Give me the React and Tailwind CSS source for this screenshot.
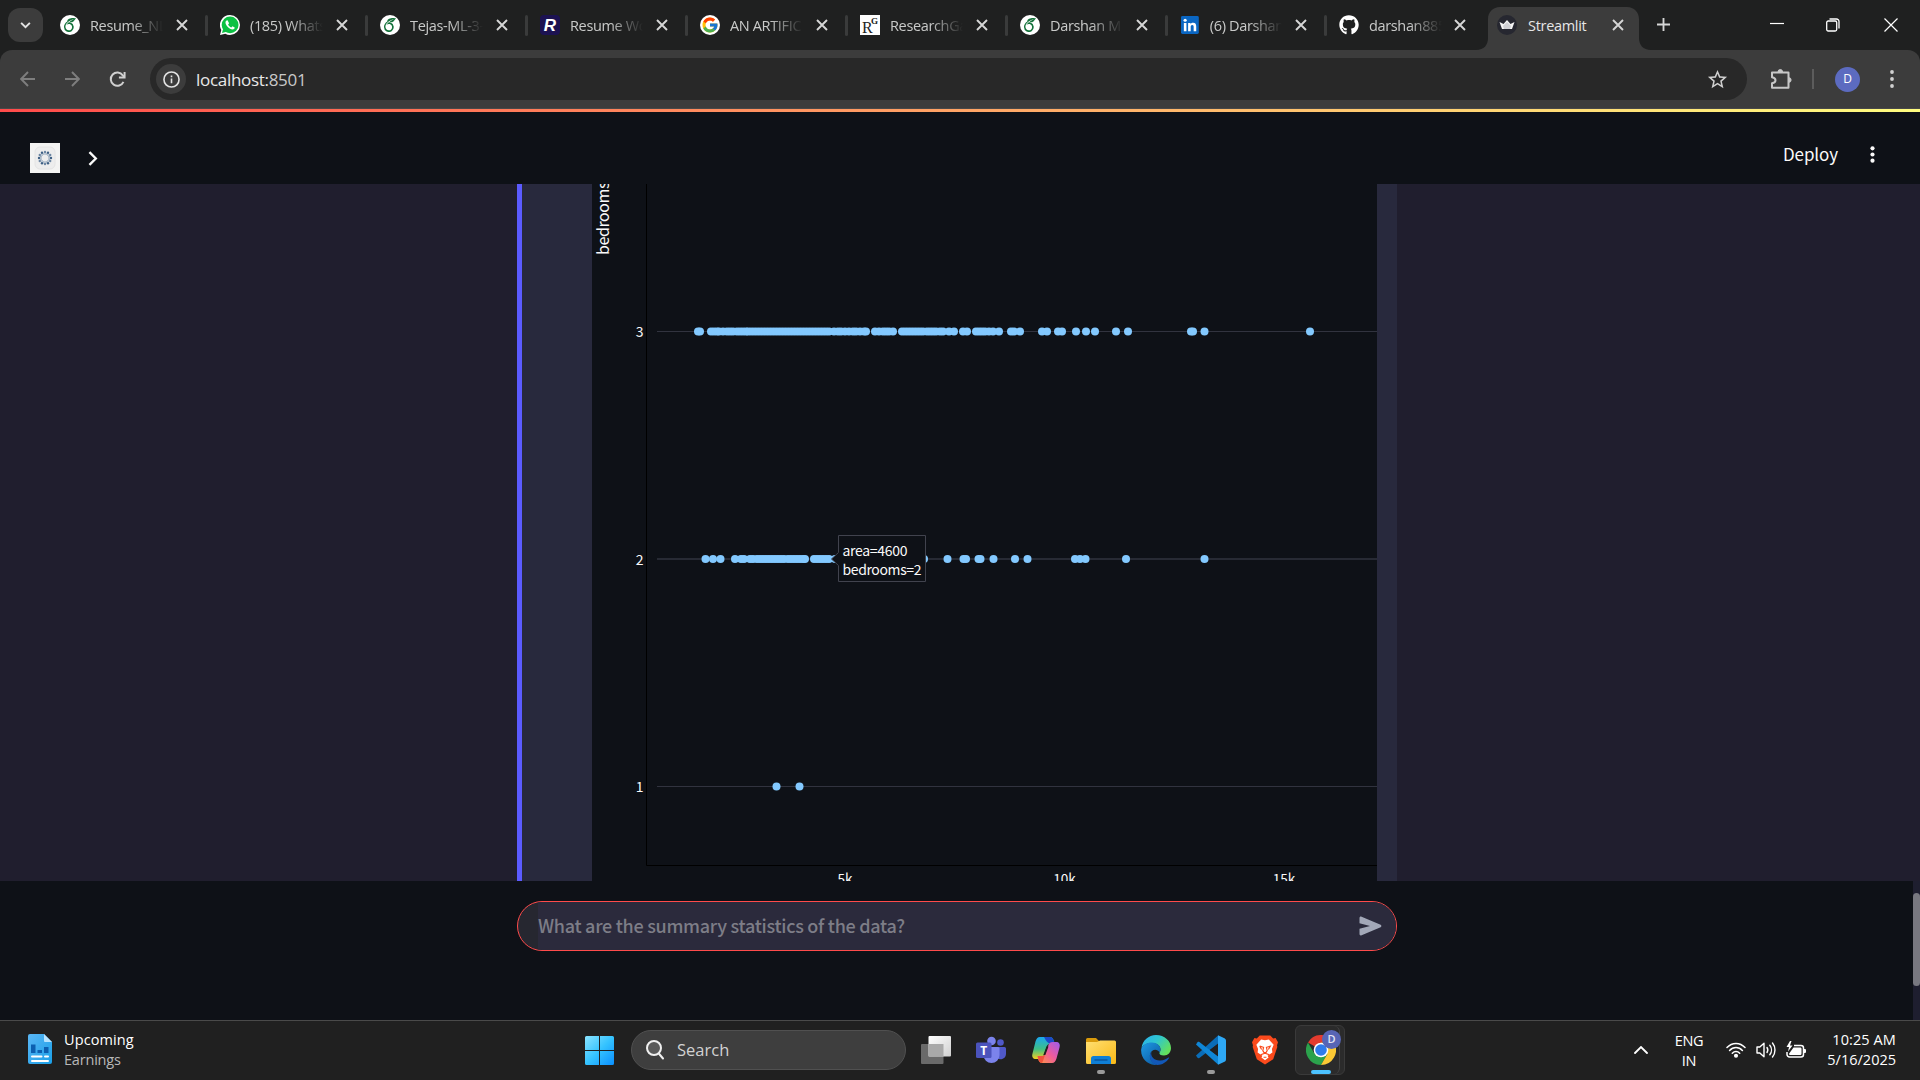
import React from "react";
import { FaGithub } from "react-icons/fa";
import { FcGoogle } from "react-icons/fc";
import { SiOverleaf } from "react-icons/si";

const ui = "font-['Open_Sans','Noto_Sans',sans-serif]";

function Close({ className = "" }) {
  return (
    <svg viewBox="0 0 12 12" className={"size-3 shrink-0 " + className} stroke="#d6d6d6" strokeWidth="1.9">
      <path d="M1 1l10 10M11 1L1 11" />
    </svg>
  );
}

const Overleaf = () => (
  <span className="flex size-5 items-center justify-center rounded-full bg-white text-[#13713a]">
    <SiOverleaf className="size-[14px]" />
  </span>
);

const WhatsApp = () => (
  <svg viewBox="0 0 20 20" className="size-5">
    <path d="M10 0a10 10 0 0 1 0 20c-1.700 0-3.300-.4-4.700-1.200L0 20l1.300-5A10 10 0 0 1 10 0Z" fill="#fff" />
    <circle cx="10.100" cy="9.900" r="8.400" fill="#0cc143" />
    <path d="M2 18l1.200-4.600 3.300 3.400Z" fill="#0cc143" />
    <path d="M7.500 5.300c-.9-.3-2 .8-2 2.200 0 3 4 6.900 7 6.900 1.200 0 2.300-.9 2.200-2l-2.200-1.200-1.200 1.200c-1.500-.6-2.600-1.700-3.200-3l1-1.100Z" fill="#fff" />
  </svg>
);

const Resume = () => (
  <span className="flex size-5 items-center justify-center rounded bg-[#1c1252] font-['Liberation_Sans',sans-serif] text-[17px] leading-none font-bold text-white italic">R</span>
);

const Google = () => (
  <span className="flex size-5 items-center justify-center rounded-full bg-white">
    <FcGoogle className="size-[18px]" />
  </span>
);

const ResearchGate = () => (
  <span className="relative block size-5 bg-white font-['Liberation_Serif',serif] leading-none text-[#222]">
    <span className="absolute top-[5px] left-[2px] text-[16px] leading-none">R</span>
    <span className="absolute top-[2px] right-[2px] text-[9px] leading-none font-bold">G</span>
  </span>
);

const LinkedIn = () => (
  <svg viewBox="0 0 20 20" className="size-5">
    <rect x="1" y="1" width="18" height="18" rx="1.500" fill="#0a66c2" />
    <circle cx="5.200" cy="5.200" r="1.600" fill="#fff" />
    <path d="M3.900 8h2.600v8.200H3.900ZM8.200 8h2.500v1.200c.5-.9 1.400-1.400 2.600-1.400 2.400 0 3.100 1.500 3.100 3.700v4.700h-2.600V12c0-1.200-.2-2-1.400-2-1.200 0-1.600.9-1.600 2.100v4.100H8.200Z" fill="#fff" />
  </svg>
);

const Github = () => <FaGithub className="size-5 text-white" />;

const TABS = [
  [Overleaf, "Resume_NLP"],
  [WhatsApp, "(185) WhatsApp"],
  [Overleaf, "Tejas-ML-3-1"],
  [Resume, "Resume Worded"],
  [Google, "AN ARTIFICIAL"],
  [ResearchGate, "ResearchGate"],
  [Overleaf, "Darshan M R"],
  [LinkedIn, "(6) Darshan M"],
  [Github, "darshan8850"],
];

function TabStrip() {
  return (
    <div className={"flex h-[50px] shrink-0 bg-[#1f2020] " + ui}>
      <div className="mt-2 ml-2 flex h-[34px] w-[35px] shrink-0 items-center justify-center rounded-xl bg-[#3c3c3c]">
        <svg viewBox="0 0 12 8" className="h-[7px] w-[11px]" fill="none" stroke="#e3e3e3" strokeWidth="2.200">
          <path d="M1 1l5 5 5-5" />
        </svg>
      </div>
      <div className="ml-[5px] flex shrink-0">
        {TABS.map(([Icon, label], i) => (
          <div key={i} className={"flex h-[50px] shrink-0 items-center pl-3 " + (i > 7 ? "w-[149px]" : i === 7 ? "w-[159px]" : "w-[160px]")}>
            <Icon />
            <span className="mt-px ml-[10px] w-[73px] overflow-hidden text-[14.500px] tracking-[-0.350px] whitespace-nowrap text-[#c9cac9] [mask-image:linear-gradient(90deg,#000_55%,transparent)]">{label}</span>
            <Close className={i > 7 ? "ml-[12px]" : "ml-[13px]"} />
            {i < 8 && <span className="ml-[17px] h-[21px] w-[3px] rounded-full bg-[#3a3b3b]" />}
          </div>
        ))}
      </div>
      <div className="relative mt-[7px] ml-[12px] h-[43px] w-[151px] shrink-0">
        <svg viewBox="0 0 175 43" className="absolute top-0 -left-3 h-[43px] w-[175px]">
          <path d="M0 43c8 0 12-5 12-12V12C12 5 17 0 24 0h127c7 0 12 5 12 12v19c0 7 4 12 12 12Z" fill="#3c3c3c" />
        </svg>
        <div className="relative flex h-9 items-center pl-[9px]">
          <svg viewBox="0 0 20 20" className="size-5">
            <circle cx="10" cy="10" r="10" fill="#262730" />
            <path d="M2.500 7l4 2L10 5l3.500 4 4-2-2.500 7H5Z" fill="#f4f4f4" />
            <path d="M6 11l4-4 4 4-1 3H7Z" fill="#b9b9bf" opacity=".6" />
          </svg>
          <span className="mt-px ml-[11px] w-[79px] text-[14.500px] tracking-[-0.300px] text-[#e6e6e6]">Streamlit</span>
          <Close className="ml-[5px]" />
        </div>
      </div>
      <svg viewBox="0 0 14 14" className="mt-[18px] ml-[18px] size-[13px]" stroke="#d6d6d6" strokeWidth="2">
        <path d="M7 0v14M0 7h14" />
      </svg>
      <div className="ml-auto flex h-[50px] items-center pr-[22px]">
        <svg viewBox="0 0 14 14" className="mr-[42px] size-[14px]"><path d="M0 6.500h14" stroke="#fff" strokeWidth="1.200" transform="translate(0 -1)" /></svg>
        <svg viewBox="0 0 14 14" className="mr-[44px] size-[14px]" fill="none" stroke="#fff" strokeWidth="1.300">
          <rect x=".7" y="3" width="10" height="10" rx="1.500" />
          <path d="M3.500 1h7A2.500 2.500 0 0 1 13 3.500v7" />
        </svg>
        <svg viewBox="0 0 14 14" className="size-[14px]" stroke="#fff" strokeWidth="1.200"><path d="M.5.500l13 13M13.500.500l-13 13" /></svg>
      </div>
    </div>
  );
}

function Toolbar() {
  return (
    <div className="shrink-0 bg-[#1f2020]">
      <div className={"flex h-[59px] items-center rounded-t-xl border-b border-[#484848] bg-[#3c3c3c] " + ui}>
        <svg viewBox="0 0 16 16" className="ml-5 size-4" fill="none" stroke="#7e7e7e" strokeWidth="1.900"><path d="M15 8H1.500M8 1L1.200 8 8 15" /></svg>
        <svg viewBox="0 0 16 16" className="ml-[28px] size-4" fill="none" stroke="#7e7e7e" strokeWidth="1.900"><path d="M1 8h13.500M8 1l6.800 7L8 15" /></svg>
        <svg viewBox="0 0 18 18" className="ml-[29px] size-[17px]" fill="none" stroke="#d0d0d0" strokeWidth="2.100">
          <path d="M15.300 11.500A7 7 0 1 1 14.600 4.600L16 6.300" />
          <path d="M16.500 1v6h-6" />
        </svg>
        <div className="ml-[24px] flex h-[42px] w-[1597px] items-center rounded-full bg-[#282828]">
          <span className="ml-[6px] flex size-[30px] items-center justify-center rounded-full bg-[#3c3c3c]">
            <svg viewBox="0 0 18 18" className="size-[17px]" fill="none" stroke="#e3e3e3" strokeWidth="1.700">
              <circle cx="9" cy="9" r="8" />
              <path d="M9 8v5M9 4.800v1.900" />
            </svg>
          </span>
          <span className="mt-px ml-[10px] text-[17px] tracking-[-0.300px] text-[#e8e8e8]">localhost:<span className="text-[#c8c8c8]">8501</span></span>
          <svg viewBox="0 0 24 24" className="mr-[18px] ml-auto size-[23px]" fill="#d0d0d0"><path d="M22 9.240l-7.190-.62L12 2 9.190 8.630 2 9.240l5.460 4.730L5.820 21 12 17.270 18.180 21l-1.630-7.030zM12 15.400l-3.760 2.270 1-4.280-3.320-2.880 4.380-.38L12 6.100l1.710 4.040 4.380.38-3.320 2.880 1 4.280z" /></svg>
        </div>
        <svg viewBox="0 0 22 22" className="ml-[23px] size-[22px]" fill="none" stroke="#c7c7c7" strokeWidth="2" strokeLinejoin="round">
          <path d="M2 4.500h16.500v15.300H2v-4.500c3-.5 3.500-1.600 3.500-3s-.5-2.600-3.500-3.100Z" />
          <path d="M8 4a2.200 2.400 0 0 1 4.600 0ZM18.800 9.700a2.300 2.300 0 0 1 0 4.600Z" fill="#c7c7c7" strokeWidth="1" />
        </svg>
        <span className="ml-[20px] h-5 w-[2px] bg-[#5c5c5c]" />
        <span className="ml-[21px] flex size-[25px] items-center justify-center rounded-full bg-[#5c6bc0] text-[12px] text-white">D</span>
        <svg viewBox="0 0 4 18" className="ml-[30px] h-[18px] w-1" fill="#d0d0d0"><circle cx="2" cy="2" r="1.900" /><circle cx="2" cy="9" r="1.900" /><circle cx="2" cy="16" r="1.900" /></svg>
      </div>
    </div>
  );
}

const ROW3 = [
  698, 700, 711, 714, 717, 719, 723, 727, 730, 733, 737, 740, 743, 746, 748, 751, 754, 757, 760, 763, 766, 769, 772, 775, 778, 781, 784, 787, 790, 793,
  796, 799, 802, 805, 808, 811, 814, 817, 820, 823, 826, 829, 834, 838, 841, 845, 849, 853, 856, 860, 864, 866, 875, 879, 883, 886, 889, 893, 902, 905,
  908, 911, 914, 917, 920, 923, 927, 930, 933, 936, 940, 943, 949, 954, 963, 967, 976, 979, 982, 985, 989, 993, 999, 1011, 1014, 1020, 1042, 1047, 1058,
  1062, 1076, 1086, 1095, 1116, 1128, 1191, 1193, 1204.500, 1310,
];
const ROW2 = [
  705.500, 713, 720.500, 735, 741, 744, 750, 753, 757, 760, 763, 766, 769, 772, 775, 778, 781, 784, 788, 791, 794, 797, 800, 803, 805, 814, 817, 820,
  823, 826, 829, 835, 924, 947.500, 963.500, 966, 978.500, 980.500, 993.500, 1015, 1027.500, 1075, 1080, 1085.500, 1126, 1204.500,
];
const ROW1 = [776.500, 799.500];
const ROWS = [
  { label: "3", y: 331.5, grid: 331.5, xs: ROW3 },
  { label: "2", y: 559, grid: 559, xs: ROW2 },
  { label: "1", y: 786.5, grid: 786.5, xs: ROW1 },
];

function Chart() {
  return (
    <svg viewBox="592 184 785 697" className="h-[697px] w-[785px] bg-[#0e1117] font-['Noto_Sans_CJK_JP','Noto_Sans',sans-serif]">
      <text transform="translate(609 255) rotate(-90)" fontSize="16" fill="#fafafa" textLength="73.500">bedrooms</text>
      <path d="M646.500 184V865.500H1377" fill="none" stroke="#000" />
      {ROWS.map(({ label, y, grid, xs }) => (
        <g key={label}>
          <path d={`M657 ${grid}H1377`} stroke="#31333f" strokeWidth={label === "2" ? 1.6 : 1} />
          <text x="643.500" y={y + 5.500} fontSize="14" textAnchor="end" fill="#fafafa">{label}</text>
          <g fill="#83c9ff">{xs.map((x) => <circle key={x} cx={x} cy={y} r="4" />)}</g>
        </g>
      ))}
      <g fontSize="13.600" textAnchor="middle" fill="#fafafa">
        <text x="845" y="884">5k</text>
        <text x="1064.500" y="884">10k</text>
        <text x="1284" y="884">15k</text>
      </g>
      <path d="M831.500 559L838.500 552.500V535.500H925.500V581.500H838.500V565.500Z" fill="#0e1117" stroke="#41434e" />
      <g fontSize="14" fill="#fafafa">
        <text x="842.500" y="555.500" textLength="65">area=4600</text>
        <text x="842.500" y="574.500" textLength="79">bedrooms=2</text>
      </g>
    </svg>
  );
}

const RING = Array.from({ length: 12 }, (_, i) => (i * Math.PI) / 6);

function StreamlitPage() {
  return (
    <div className="flex min-h-0 flex-1 flex-col bg-[#0e1117]">
      <div className="h-[3px] shrink-0 bg-[linear-gradient(90deg,#ff4b4b,#fffd80)]" />
      <header className="flex h-[72px] shrink-0 items-center font-['Noto_Sans_CJK_JP','Noto_Sans',sans-serif]">
        <svg viewBox="0 0 30 30" className="mt-[20px] ml-[30px] size-[30px] self-center">
          <rect width="30" height="30" fill="#f3f3f2" />
          <rect x="5" y="4" width="20" height="22" rx="5" fill="#ededed" stroke="#e4e4e4" />
          {RING.map((a, i) => (
            <g key={i}>
              <circle cx={15 + 6 * Math.cos(a)} cy={15 + 6 * Math.sin(a)} r="1.200" fill={i % 2 ? "#6d87a3" : "#3d5f84"} />
              <circle cx={15 + 4.200 * Math.cos(a + 0.260)} cy={15 + 4.200 * Math.sin(a + 0.260)} r=".8" fill="#7590ac" />
            </g>
          ))}
        </svg>
        <svg viewBox="0 0 10 16" className="mt-[21px] ml-[28px] h-[15px] w-[10px]" fill="none" stroke="#fafafa" strokeWidth="2.500"><path d="M1.200 1.200L8 8l-6.800 6.800" /></svg>
        <span className="mt-[12px] ml-auto text-[17px] tracking-[-0.100px] text-[#fafafa]">Deploy</span>
        <svg viewBox="0 0 5 18" className="mt-[13px] mr-[45px] ml-[32px] h-[17px] w-[5px]" fill="#fafafa"><circle cx="2.500" cy="2.500" r="2.200" /><circle cx="2.500" cy="9" r="2.200" /><circle cx="2.500" cy="15.500" r="2.200" /></svg>
      </header>
      <main className="h-[697px] shrink-0 bg-[#201e2e] pl-[517px]">
        <div className="w-[880px] border-l-[5px] border-[#5b5bff] bg-[#28293d] pl-[70px]">
          <Chart />
        </div>
      </main>
      <div className="flex min-h-0 flex-1">
        <div className="flex-1 pt-5 pl-[517px]">
          <div className="flex h-[50px] w-[880px] items-center overflow-hidden rounded-full border border-[#ff4b4b] bg-[#262730]">
            <div className="ml-5 flex h-full flex-1 items-center bg-[#2b2a3c] font-['Noto_Sans_CJK_JP','Noto_Sans',sans-serif] text-[18px] font-medium text-[#7d7d87]">
              <span className="-mt-[2px] tracking-[-0.280px] whitespace-nowrap">What are the summary statistics of the data?</span>
              <svg viewBox="0 0 23 20" className="mr-[14px] ml-auto h-5 w-[23px]" fill="#a3a8b8"><path d="M.5 2.200C.5.700 1.400.300 2.600.800l19 8c1 .5 1 1.900 0 2.400l-19 8c-1.200.5-2.100.1-2.100-1.400v-5L11 10 .5 7.200Z" /></svg>
            </div>
          </div>
        </div>
        <div className="w-[7px] bg-[#1e1e2f] pt-3">
          <div className="h-[93px] rounded-full bg-[#787880]" />
        </div>
      </div>
    </div>
  );
}

function Defs() {
  return (
    <svg className="absolute size-0">
      <defs>
        <linearGradient id="win" x1="0" y1="0" x2="1" y2="1"><stop stopColor="#8be4ff" /><stop offset=".5" stopColor="#35c3ff" /><stop offset="1" stopColor="#0a8fff" /></linearGradient>
        <linearGradient id="doc" x1="0" y1="0" x2="1" y2="1"><stop stopColor="#5ab6f5" /><stop offset="1" stopColor="#1aa0e8" /></linearGradient>
        <linearGradient id="edgeA" x1="0" y1="0" x2="1" y2=".6"><stop stopColor="#29aef0" /><stop offset=".5" stopColor="#2fc6cf" /><stop offset="1" stopColor="#63e05c" /></linearGradient>
        <linearGradient id="edgeB" x1="0" y1="0" x2=".8" y2="1"><stop stopColor="#1f9ce4" /><stop offset="1" stopColor="#0c59a4" /></linearGradient>
        <linearGradient id="copL" x1="0" y1="0" x2="0" y2="1"><stop stopColor="#1aa7f0" /><stop offset=".55" stopColor="#3fbf85" /><stop offset="1" stopColor="#f5cf20" /></linearGradient>
        <linearGradient id="copR" x1="1" y1="0" x2="0" y2="1"><stop stopColor="#9b5cf0" /><stop offset=".5" stopColor="#ee5b9c" /><stop offset="1" stopColor="#ff9a3c" /></linearGradient>
        <linearGradient id="fold" x1="0" y1="0" x2="1" y2="1"><stop stopColor="#ffdf73" /><stop offset="1" stopColor="#f9b916" /></linearGradient>
        <linearGradient id="tv" x1="0" y1="0" x2="1" y2="1"><stop stopColor="#fff" /><stop offset="1" stopColor="#d0d0d0" /></linearGradient>
      </defs>
    </svg>
  );
}

const box = "shrink-0 size-[30px] ";

function Taskbar() {
  return (
    <footer className={"flex h-[60px] shrink-0 border-t border-[#4a4a4a] bg-[#202020] text-white " + ui}>
      <div className="flex w-[585px] items-start">
        <svg viewBox="0 0 24 30" className="mt-[13px] ml-[28px] h-[30px] w-6">
          <path d="M2 0h14l8 8v20a2 2 0 0 1-2 2H2a2 2 0 0 1-2-2V2a2 2 0 0 1 2-2Z" fill="url(#doc)" />
          <path d="M16 0l8 8h-7a1 1 0 0 1-1-1Z" fill="#b8e4ff" />
          <path d="M3 10.500h4.500V19H3ZM9.500 16H14v3H9.500ZM16 13h4.500v6H16Z" fill="#0c5fb0" />
          <path d="M4 22.500h9.500M17 22.500h3M4 27h16" stroke="#fff" strokeWidth="2" strokeLinecap="round" />
        </svg>
        <div className="mt-[9px] ml-3 text-[14.500px] leading-5">
          <div className="tracking-[0.100px]">Upcoming</div>
          <div className="text-[#b8b8b8] tracking-[-0.200px]">Earnings</div>
        </div>
      </div>
      <svg viewBox="0 0 29 29" className="mt-[15px] size-[29px] shrink-0" fill="url(#win)">
        <path d="M1.500 0H14v14H0V1.500A1.500 1.500 0 0 1 1.500 0ZM15 0h12.500A1.500 1.500 0 0 1 29 1.500V14H15ZM0 15h14v14H1.500A1.500 1.500 0 0 1 0 27.500ZM15 15h14v12.500a1.500 1.500 0 0 1-1.500 1.500H15Z" />
      </svg>
      <div className="mt-[9px] ml-[17px] flex h-10 w-[275px] shrink-0 items-center rounded-full border border-[#505050] bg-[#3e3e3e] pl-[14px]">
        <svg viewBox="0 0 18 20" className="h-5 w-[18px]" fill="none" stroke="#f0f0f0" strokeWidth="2"><circle cx="8" cy="8" r="7" fill="#5a5a5a" /><path d="M12.800 13.500l4.200 5" strokeLinecap="round" /></svg>
        <span className="mt-px ml-[13px] text-[16.500px] text-[#d2d2d2]">Search</span>
      </div>
      <svg viewBox="0 0 30 28" className="mt-[15px] ml-[15px] h-7 w-[30px] shrink-0">
        <rect x="0" y="8" width="22.500" height="20" rx="1" fill="#6a6a6a" />
        <rect x="7.500" y="0" width="22.500" height="20.500" rx="1" fill="url(#tv)" />
        <path d="M7.500 8h15v12.500h-15Z" fill="#a9a9a9" />
      </svg>
      <svg viewBox="0 0 30 30" className={box + "mt-[14px] ml-[25px]"}>
        <circle cx="24.500" cy="7.500" r="3.300" fill="#5059c9" />
        <path d="M19 12h9.500a1.500 1.500 0 0 1 1.500 1.500V19a5.500 5.500 0 0 1-9 4Z" fill="#5059c9" />
        <circle cx="15.500" cy="6" r="4.300" fill="#7b83eb" />
        <path d="M9 12h13a1.500 1.500 0 0 1 1.500 1.500V20a8 8 0 0 1-16 0v-7Z" fill="#7b83eb" />
        <rect x="0" y="7.500" width="15.500" height="15.500" rx="1.500" fill="#4b53bc" />
        <text x="7.700" y="19.500" fontSize="12" fontWeight="700" textAnchor="middle" fill="#fff">T</text>
      </svg>
      <svg viewBox="0 0 30 30" className={box + "mt-[14px] ml-[25px]"}>
        <path d="M9 2h10c2 0 3 1.500 3.500 3L24 9h-5c-2 0-3 1-3.500 3l-3 9c-.7 2-2 3-4 3H5c-3 0-4.500-2-3.500-5.500l3-12C5.300 4 6.500 2 9 2Z" fill="url(#copL)" />
        <path d="M13 2h6c2 0 3 1.500 3.500 3L24 9h-5c-2-1-4-3-6-7Z" fill="#1c49c9" />
        <path d="M21 28H11c-2 0-3-1.500-3.500-3L6.500 21H11c2 0 3-1 3.500-3l3-8c.7-2 2-3 4-3H25c3 0 4.500 2 3.500 5.500l-3 11C24.700 26 23.500 28 21 28Z" fill="url(#copR)" />
        <path d="M11 28c-2 0-3-1.500-3.500-3L6.500 21H11c1.500 0 2.500-.5 3.300-2L12 26Z" fill="#f0533c" />
        <path d="M15.500 11.500h2l-3.200 8.500h-2Z" fill="#202020" />
      </svg>
      <div className="mt-[16px] ml-[25px] flex shrink-0 flex-col items-center">
        <svg viewBox="0 0 30 27" className="h-[27px] w-[30px]">
          <path d="M1.500 1H10l3 3v6H0V2.500A1.500 1.500 0 0 1 1.500 1Z" fill="#d99a0b" />
          <path d="M0 5h11l3-1.500h14.500A1.500 1.500 0 0 1 30 5v20.500a1.500 1.500 0 0 1-1.500 1.500h-27A1.500 1.500 0 0 1 0 25.500Z" fill="url(#fold)" />
          <path d="M5 27v-5.500A2.500 2.500 0 0 1 7.500 19h15a2.500 2.500 0 0 1 2.500 2.500V27Z" fill="#0f7fd6" />
          <path d="M8.500 23h13" stroke="#0a4f96" strokeWidth="1.300" />
        </svg>
        <span className="mt-[6px] h-1 w-2 rounded-full bg-[#9a9a9a]" />
      </div>
      <svg viewBox="0 0 30 30" className={box + "mt-[14px] ml-[25px]"}>
        <path d="M.5 13C1.500 5.500 7.500 0 15 0c8.500 0 15 6 15 13 0 4.500-3 7.500-7 7.500-3.500 0-5-1.300-4.500-2.700.6-1.300 1-2 1-3.300 0-4-4-6.500-8.500-6.500C6 8 2 10 .5 13Z" fill="url(#edgeA)" />
        <path d="M.2 14C1.500 10 6 7.300 11 7.500c4.800.2 8.500 3 8.500 7 0 1.300-.5 2-1 3-1.500-3-5-3.500-7.500-1.500-4 3.500-2 11 4 13.500l2 .5C8 31-.7 24 .2 14Z" fill="url(#edgeB)" />
        <path d="M10.500 16.500c-1.500 5 3 9.500 9 9 3 0 6-1.500 8-3 .5-.3.900.2.600.6C25.500 27.500 21 30 16.500 30 9 28.500 7 21 10.500 16.500Z" fill="#1258b8" />
      </svg>
      <div className="mt-[14px] ml-[25px] flex shrink-0 flex-col items-center">
        <svg viewBox="0 0 30 30" className="size-[30px]">
          <path d="M22 .5L0 20.500l1.500 2.300c.5.600 1.300.600 1.900.200L24 7Z" fill="#0a6db8" />
          <path d="M22 29.500L0 9.500l1.500-2.300c.5-.6 1.300-.6 1.900-.2L24 23Z" fill="#0f86d6" />
          <path d="M22 .3L28.500 3.300A2.500 2.500 0 0 1 30 5.600v18.800a2.500 2.500 0 0 1-1.500 2.300L22 29.700Z" fill="#2ea8f5" />
          <path d="M22 9v12l-8-6Z" fill="#202020" />
        </svg>
        <span className="mt-[5px] h-1 w-2 rounded-full bg-[#9a9a9a]" />
      </div>
      <svg viewBox="0 0 27 30" className="mt-[14px] ml-[26px] h-[30px] w-[26px] shrink-0">
        <path d="M8 0h11l3 3 2.500-.5L27 7l-1 3 .3 2L22 24.500 13.500 30 5 24.500.7 12l.3-2L0 7l2.500-4.500L5 3Z" fill="#fb4a1c" />
        <path d="M13.500 5l4-.8 5 5.300-1.800 4.500.5 3.500-5 3.500 1 1.700-3.700 3-3.700-3 1-1.700-5-3.500.5-3.500-1.800-4.500 5-5.300Z" fill="#fff" />
        <path d="M8 11l4 1.200-.8 3.500 1.300 2h2l1.300-2-.8-3.500 4-1.200-2 3.500M8 11l2 3.500M9 20l4.500-1.700L18 20M12 22.500h3" fill="none" stroke="#fb4a1c" strokeWidth="1.200" />
      </svg>
      <div className="mt-1 ml-[17px] flex h-[50px] w-[50px] shrink-0 rounded-md border border-[#3a3a3a] bg-[#2b2b2b]">
        <div className="relative flex w-[44px] flex-col items-start rounded-md border-r border-[#444] pt-[9px]">
          <svg viewBox="0 0 30 30" className="ml-[10px] size-[30px]">
            <path d="M15 15L2 7.500A15 15 0 0 1 28 7.500H15Z" fill="#e33b2e" />
            <path d="M15 15L21.500 18.700 15 30A15 15 0 0 1 2 7.500l6.500 11.200Z" fill="#2ba24c" />
            <path d="M15 15V7.500h13A15 15 0 0 1 15 30l6.500-11.300Z" fill="#fcc934" />
            <circle cx="15" cy="15" r="7.300" fill="#fff" />
            <circle cx="15" cy="15" r="5.800" fill="#2f7cec" />
          </svg>
          <span className="absolute top-[4px] left-[26px] flex size-[19px] items-center justify-center rounded-full bg-[#5765b5] text-[11px] font-semibold text-[#e4e6f5]">D</span>
          <span className="mt-[5px] ml-[15px] h-1 w-5 rounded-full bg-[#4cc2ff]" />
        </div>
      </div>
      <div className="ml-auto flex items-start">
        <svg viewBox="0 0 14 8" className="mt-[25px] h-2 w-[14px]" fill="none" stroke="#fff" strokeWidth="1.800" strokeLinecap="round"><path d="M1 7l6-6 6 6" /></svg>
        <div className="mt-[10px] ml-[25px] w-[32px] text-center text-[14.500px] leading-5 tracking-[-0.300px]">
          <div>ENG</div>
          <div>IN</div>
        </div>
        <svg viewBox="0 0 20 16" className="mt-[21px] ml-[21px] h-4 w-5" fill="none" stroke="#fff" strokeWidth="1.500" strokeLinecap="round">
          <path d="M1 5.500c5-5.400 13-5.400 18 0M3.600 8.500c3.600-4 9.200-4 12.800 0M6.300 11.300c2.200-2.300 5.200-2.300 7.400 0" />
          <circle cx="10" cy="13.700" r="1.300" fill="#fff" />
        </svg>
        <svg viewBox="0 0 20 18" className="mt-[20px] ml-[10px] h-[18px] w-5" fill="none" stroke="#fff" strokeWidth="1.400" strokeLinecap="round" strokeLinejoin="round">
          <path d="M1 6h2.800L8 2.200v13.600L3.800 12H1ZM11 6.500c1 1.500 1 3.500 0 5M13.800 4.300c2.200 2.700 2.200 6.700 0 9.400M16.500 2c3.300 4 3.300 10 0 14" />
        </svg>
        <svg viewBox="0 0 20 18" className="mt-[20px] ml-[10px] h-[18px] w-5">
          <path d="M8 4.500h7A2.500 2.500 0 0 1 17.500 7v6.500A2.500 2.500 0 0 1 15 16H3.500A2.500 2.500 0 0 1 1 13.500V11" fill="none" stroke="#fff" strokeWidth="1.500" />
          <path d="M7.500 6.500H14c1 0 1.500.5 1.500 1.500v4.500c0 1-.5 1.500-1.500 1.500H4.500c-1 0-1.500-.4-1.500-1.200ZM18 8h1a1 1 0 0 1 1 1v2a1 1 0 0 1-1 1h-1ZM4 0L.5 6H3l-1 4.500L6.500 4.500H4L5.500 0Z" fill="#fff" />
        </svg>
        <div className="mt-[9px] mr-[24px] w-[90px] text-right text-[14.500px] leading-5">
          <div className="tracking-[0.100px]">10:25 AM</div>
          <div>5/16/2025</div>
        </div>
      </div>
    </footer>
  );
}

export default function App() {
  return (
    <div className="flex h-[1080px] w-[1920px] flex-col overflow-hidden">
      <Defs />
      <TabStrip />
      <Toolbar />
      <StreamlitPage />
      <Taskbar />
    </div>
  );
}
